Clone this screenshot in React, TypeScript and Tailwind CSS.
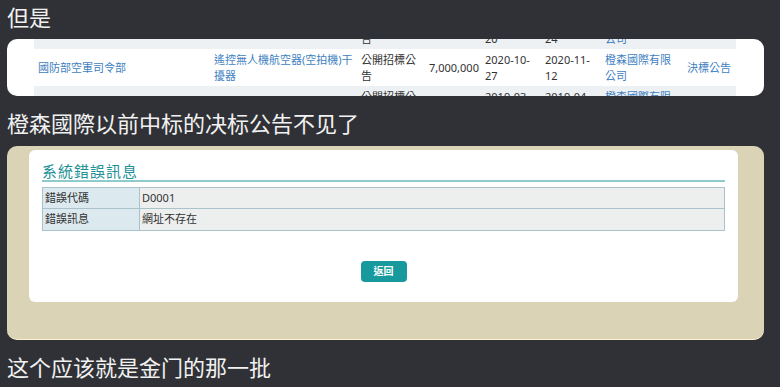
const CJK = "font-['Noto_Sans','Noto_Sans_CJK_TC',sans-serif]";

type Cell = { text: string; link?: boolean };

const COLS = "grid grid-cols-[176px_147px_68px_56px_60px_60px_82px_53px]";

const ROWS: { bg: string; cells: Cell[] }[] = [
  {
    bg: "bg-[#eef1f4]",
    cells: [
      { text: "國營事業管理局", link: true },
      { text: "反制無人機系統設備0套", link: true },
      { text: "公開招標公告" },
      { text: "5,000,000" },
      { text: "2020-03-20" },
      { text: "2020-04-24" },
      { text: "橙森國際有限公司", link: true },
      { text: "" },
    ],
  },
  {
    bg: "bg-white",
    cells: [
      { text: "國防部空軍司令部", link: true },
      { text: "遙控無人機航空器(空拍機)干擾器", link: true },
      { text: "公開招標公告" },
      { text: "7,000,000" },
      { text: "2020-10-27" },
      { text: "2020-11-12" },
      { text: "橙森國際有限公司", link: true },
      { text: "決標公告", link: true },
    ],
  },
  {
    bg: "bg-[#eef1f4]",
    cells: [
      { text: "金門縣政府", link: true },
      { text: "無人機干擾設備", link: true },
      { text: "公開招標公告" },
      { text: "3,000,000" },
      { text: "2019-03-08" },
      { text: "2019-04-02" },
      { text: "橙森國際有限公司", link: true },
      { text: "" },
    ],
  },
];

function wrapDate(t: string) {
  // dates break after the second hyphen, as in the source table
  if (/^\d{4}-\d{2}-\d{2}$/.test(t)) {
    return (
      <>
        {t.slice(0, 8)}
        <br />
        {t.slice(8)}
      </>
    );
  }
  return t;
}

function TenderSnippet() {
  return (
    <div className="ml-[7px] w-[757px] h-[57px] overflow-hidden rounded-[10px] bg-white pl-[27px]">
      <div className="-mt-[27px] w-[702px]">
        {ROWS.map((row, i) => (
          <div key={i} className={`${COLS} ${row.bg} h-[37px] items-center text-[11px] leading-[16px] ${CJK}`}>
            {row.cells.map((c, j) => (
              <div key={j} className={`pl-[4px] pr-[2px] ${c.link ? "text-[#3f7fbf]" : "text-[#333]"}`}>
                {wrapDate(c.text)}
              </div>
            ))}
          </div>
        ))}
      </div>
    </div>
  );
}

function ErrorSnippet() {
  return (
    <div className="ml-[7px] w-[757px] h-[194px] rounded-[10px] bg-[#dbd3b6] border-b border-[#fbf1cf] pl-[22px] pr-[26px] pt-[4px]">
      <div className="h-[152px] rounded-[6px] bg-white px-[13px] pt-[11px]">
        <div className={`h-[21px] leading-[20px] text-[15px] tracking-[1px] text-[#1e9196] border-b-2 border-[#8ecbcd] ${CJK}`}>
          系統錯誤訊息
        </div>
        <table className={`mt-[5px] w-full border-collapse text-[11px] text-[#333] ${CJK}`}>
          <tbody>
            <tr className="h-[21px]">
              <td className="w-[97px] border border-[#a9c2cc] bg-[#dce9ee] pl-[2px]">錯誤代碼</td>
              <td className="border border-[#a9c2cc] bg-[#edefef] pl-[2px]">D0001</td>
            </tr>
            <tr className="h-[22px]">
              <td className="border border-[#a9c2cc] bg-[#dce9ee] pl-[2px]">錯誤訊息</td>
              <td className="border border-[#a9c2cc] bg-[#edefef] pl-[2px]">網址不存在</td>
            </tr>
          </tbody>
        </table>
        <div className="mt-[30px] flex justify-center">
          <button className={`h-[21px] w-[46px] rounded-[4px] bg-[#17999e] text-[10px] font-bold text-white ${CJK}`}>
            返回
          </button>
        </div>
      </div>
    </div>
  );
}

export default function App() {
  const line = "pl-[7px] h-[33px] leading-[33px] text-[22px] text-[#f1f1f1] font-['Noto_Sans_CJK_SC','Noto_Sans_CJK_TC',sans-serif]";
  return (
    <div className="w-[780px] h-[387px] overflow-hidden bg-[#303136]">
      <div className={line}>但是</div>
      <div className="mt-[6px]">
        <TenderSnippet />
      </div>
      <div className={`${line} mt-[10px]`}>橙森國際以前中标的决标公告不见了</div>
      <div className="mt-[7px]">
        <ErrorSnippet />
      </div>
      <div className={`${line} mt-[10px]`}>这个应该就是金门的那一批</div>
    </div>
  );
}
